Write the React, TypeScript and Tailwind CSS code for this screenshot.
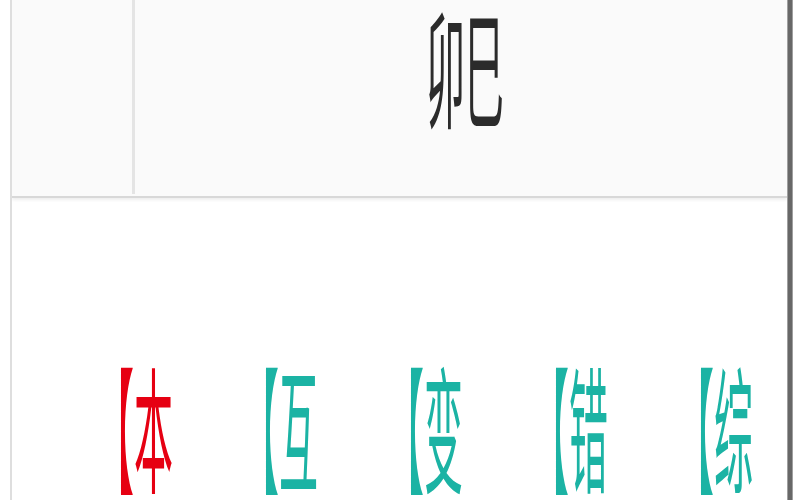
import React from "react";

const items = [
  { t: "本", c: "text-[#e60012]" },
  { t: "互", c: "text-[#1bb3a4]" },
  { t: "变", c: "text-[#1bb3a4]" },
  { t: "错", c: "text-[#1bb3a4]" },
  { t: "综", c: "text-[#1bb3a4]" },
];

export default function App() {
  return (
    <div
      className="w-[800px] h-[500px] overflow-hidden bg-white flex"
      style={{ fontFamily: '"Noto Sans CJK SC", "Noto Sans", sans-serif' }}
    >
      <div className="w-[10px] shrink-0 bg-white" />
      <div className="flex-1 min-w-0 overflow-hidden flex flex-col border-l-2 border-[#dedede]">
        <div className="h-[198px] shrink-0 flex bg-[#fafafa] border-b-2 border-[#d8d8d8] shadow-[0_2px_3px_rgba(0,0,0,0.07)]">
          <div className="w-[123px] shrink-0 border-r-[3px] border-[#e4e4e4] mb-[2px]" />
          <div className="flex-1 flex justify-center pl-[8px] pt-0">
            <span className="inline-block text-[39px] leading-none text-[#2b2b2b] scale-y-[3.3] origin-top">
              卯巳
            </span>
          </div>
        </div>
        <div className="flex-1 flex pl-[83px] pt-[159px]">
          {items.map((it) => (
            <div key={it.t} className="w-[145px] shrink-0">
              <span
                className={`inline-block text-[39px] leading-none whitespace-nowrap scale-y-[3.5] origin-top ${it.c}`}
              >
                【{it.t}
              </span>
            </div>
          ))}
        </div>
      </div>
      <div className="w-[6px] shrink-0 bg-[#686868] border-x border-[#a0a0a0]" />
      <div className="w-[7px] shrink-0 bg-white" />
    </div>
  );
}
